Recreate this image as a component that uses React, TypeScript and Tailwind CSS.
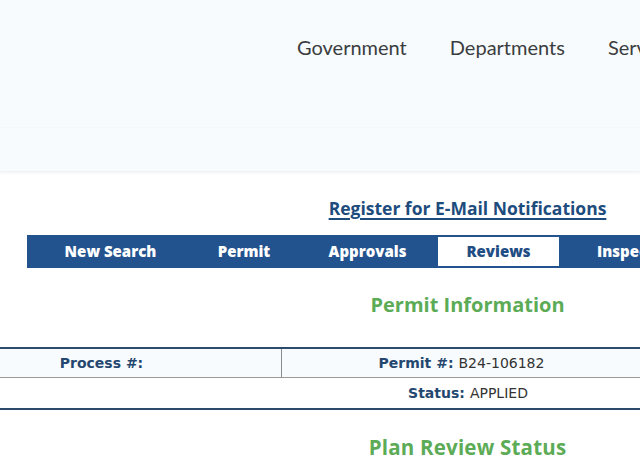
import React from "react";

const tabs = [
  { label: "New Search", w: "w-[149px]", ml: "ml-0" },
  { label: "Permit", w: "w-[112px]", ml: "ml-[3px]" },
  { label: "Approvals", w: "w-[135px]", ml: "ml-0" },
];

export default function App() {
  return (
    <div className="w-[640px] h-[460px] overflow-hidden bg-white relative">
      {/* header */}
      <header className="h-[172px] bg-[#f7fbfe] shadow-[0_1px_3px_rgba(0,0,0,0.05)] border-b border-[#f0f3f6]">
        <div className="h-[128px] border-b border-[#f4f7fa]">
          <nav
            className="flex gap-[43px] pl-[297px] pt-[32px] text-[20px] text-[#3b3d40] whitespace-nowrap"
            style={{ fontFamily: "Lato, 'Open Sans', sans-serif" }}
          >
            <span>Government</span>
            <span>Departments</span>
            <span>Services</span>
          </nav>
        </div>
      </header>

      <div className="ml-[27px] w-[881px]" style={{ fontFamily: "'Open Sans', Lato, sans-serif" }}>
        <div className="h-[63px] pt-[24px] text-center">
          <a className="text-[17.5px] leading-[24px] font-bold text-[#1d4c7d] underline underline-offset-[3px] decoration-[1.5px]">
            Register for E-Mail Notifications
          </a>
        </div>

        <div className="h-[33px] bg-[#22538f] flex items-center pl-[9px] text-[15px] font-extrabold text-white whitespace-nowrap">
          {tabs.map((t) => (
            <div key={t.label} className={`${t.w} ${t.ml} h-[29px] flex items-center justify-center`}>
              {t.label}
            </div>
          ))}
          <div className="w-[121px] ml-[3px] h-[29px] bg-white text-[#1f4d84] flex items-center justify-center">
            Reviews
          </div>
          <div className="ml-[7px] pl-[31px] h-[29px] flex items-center">Inspections</div>
        </div>

        <div className="h-[79px] pt-[23px] text-center">
          <h2 className="text-[20px] leading-[28px] font-bold text-[#5cab56]">Permit Information</h2>
        </div>
      </div>

      {/* table */}
      <div
        className="-ml-[78px] w-[1080px] border-t-2 border-b-2 border-[#2c4b6c] text-[14px]"
        style={{ fontFamily: "'DejaVu Sans', Verdana, sans-serif" }}
      >
        <div className="h-[29px] flex bg-[#f8fbfd] border-b border-[#9a9a9a]">
          <div className="w-[360px] flex items-center justify-center border-r border-[#8a8a8a]">
            <span className="font-bold text-[#24476f]">Process #:</span>
          </div>
          <div className="w-[360px] flex items-center justify-center border-r border-[#8a8a8a]">
            <span className="font-bold text-[#24476f]">Permit #:</span>
            <span className="ml-[5px] text-[#333]">B24-106182</span>
          </div>
          <div className="w-[360px] flex items-center justify-center"></div>
        </div>
        <div className="h-[30px] flex items-center justify-center bg-white pl-[12px]">
          <span className="font-bold text-[#24476f]">Status:</span>
          <span className="ml-[5px] text-[#333]">APPLIED</span>
        </div>
      </div>

      <div className="ml-[27px] w-[881px] pt-[23px] text-center" style={{ fontFamily: "'Open Sans', Lato, sans-serif" }}>
        <h2 className="text-[20.5px] leading-[28px] font-bold text-[#5cab56] tracking-[0.2px]">Plan Review Status</h2>
      </div>
    </div>
  );
}
